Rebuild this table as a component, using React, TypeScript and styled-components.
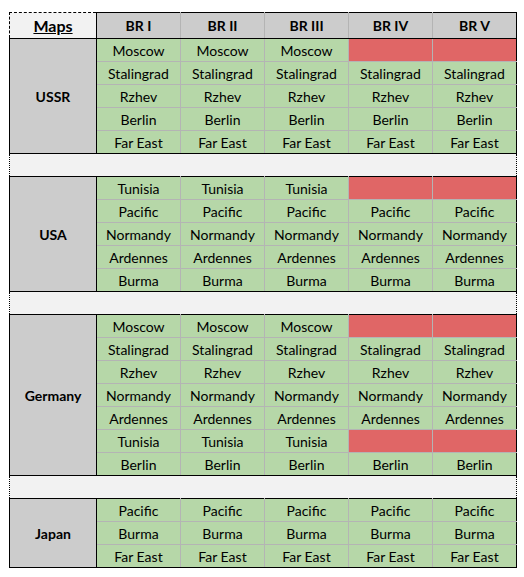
import React, { FC } from "react";
import styled, { createGlobalStyle } from "styled-components";

const GlobalStyle = createGlobalStyle`
  body {
    margin: 0;
    background: #ffffff;
    font-family: Lato, "Liberation Sans", sans-serif;
    color: #000000;
  }
`;

const Wrapper = styled.div`
  padding: 12px 0 0 9px;
`;

const Sheet = styled.table`
  border-collapse: collapse;
  table-layout: fixed;
  width: 508px;
`;

const HeadRow = styled.tr`
  height: 26px;
`;

const Row = styled.tr`
  height: 23px;
`;

const MapsCell = styled.th`
  padding: 0;
  background: #f2f2f2;
  border-top: 1px dashed #000;
  border-left: 1px dashed #000;
  border-right: 1px solid #000;
  border-bottom: 1px solid #000;
  font-size: 16px;
  font-weight: 700;
  text-decoration: underline;
`;

const BrCell = styled.th<{ $last?: boolean }>`
  padding: 0;
  background: #cccccc;
  border-top: 1px solid #000;
  border-bottom: 1px solid #000;
  border-left: 1px solid #b4b4b4;
  border-right: 1px solid ${(p) => (p.$last ? "#000" : "#b4b4b4")};
  font-size: 14px;
  font-weight: 700;
`;

const CountryCell = styled.td`
  padding: 0;
  background: #cccccc;
  border: 1px solid #000;
  text-align: center;
  vertical-align: middle;
  font-size: 14px;
  font-weight: 700;
`;

const MapCell = styled.td<{ $closed?: boolean; $first?: boolean; $end?: boolean; $last?: boolean }>`
  padding: 0 0 2px;
  background: ${(p) => (p.$closed ? "#e06666" : "#b6d7a8")};
  border: 1px solid #b4b4b4;
  border-top-color: ${(p) => (p.$first ? "#000" : "#b4b4b4")};
  border-bottom-color: ${(p) => (p.$end ? "#000" : "#b4b4b4")};
  border-right-color: ${(p) => (p.$last ? "#000" : "#b4b4b4")};
  text-align: center;
  vertical-align: bottom;
  font-size: 14px;
  white-space: nowrap;
`;

const GapCell = styled.td`
  padding: 0;
  background: #f2f2f2;
  border-left: 1px dotted #000;
  border-right: 1px dotted #000;
`;

type Group = {
  country: string;
  rows: string[][];
};

// empty string = map not available at that BR
const groups: Group[] = [
  {
    country: "USSR",
    rows: [
      ["Moscow", "Moscow", "Moscow", "", ""],
      ["Stalingrad", "Stalingrad", "Stalingrad", "Stalingrad", "Stalingrad"],
      ["Rzhev", "Rzhev", "Rzhev", "Rzhev", "Rzhev"],
      ["Berlin", "Berlin", "Berlin", "Berlin", "Berlin"],
      ["Far East", "Far East", "Far East", "Far East", "Far East"],
    ],
  },
  {
    country: "USA",
    rows: [
      ["Tunisia", "Tunisia", "Tunisia", "", ""],
      ["Pacific", "Pacific", "Pacific", "Pacific", "Pacific"],
      ["Normandy", "Normandy", "Normandy", "Normandy", "Normandy"],
      ["Ardennes", "Ardennes", "Ardennes", "Ardennes", "Ardennes"],
      ["Burma", "Burma", "Burma", "Burma", "Burma"],
    ],
  },
  {
    country: "Germany",
    rows: [
      ["Moscow", "Moscow", "Moscow", "", ""],
      ["Stalingrad", "Stalingrad", "Stalingrad", "Stalingrad", "Stalingrad"],
      ["Rzhev", "Rzhev", "Rzhev", "Rzhev", "Rzhev"],
      ["Normandy", "Normandy", "Normandy", "Normandy", "Normandy"],
      ["Ardennes", "Ardennes", "Ardennes", "Ardennes", "Ardennes"],
      ["Tunisia", "Tunisia", "Tunisia", "", ""],
      ["Berlin", "Berlin", "Berlin", "Berlin", "Berlin"],
    ],
  },
  {
    country: "Japan",
    rows: [
      ["Pacific", "Pacific", "Pacific", "Pacific", "Pacific"],
      ["Burma", "Burma", "Burma", "Burma", "Burma"],
      ["Far East", "Far East", "Far East", "Far East", "Far East"],
    ],
  },
];

const brs = ["BR I", "BR II", "BR III", "BR IV", "BR V"];

const App: FC = () => {
  return (
    <Wrapper>
      <GlobalStyle />
      <Sheet>
        <colgroup>
          <col style={{ width: 87 }} />
          {brs.map((b) => (
            <col key={b} style={{ width: 84 }} />
          ))}
        </colgroup>
        <thead>
          <HeadRow>
            <MapsCell>Maps</MapsCell>
            {brs.map((b, i) => (
              <BrCell key={b} $last={i === brs.length - 1}>
                {b}
              </BrCell>
            ))}
          </HeadRow>
        </thead>
        {groups.map((g, gi) => (
          <tbody key={g.country}>
            {g.rows.map((row, ri) => (
              <Row key={ri}>
                {ri === 0 && (
                  <CountryCell rowSpan={g.rows.length}>{g.country}</CountryCell>
                )}
                {row.map((m, ci) => (
                  <MapCell
                    key={ci}
                    $closed={m === ""}
                    $first={ri === 0}
                    $end={ri === g.rows.length - 1}
                    $last={ci === row.length - 1}
                  >
                    {m}
                  </MapCell>
                ))}
              </Row>
            ))}
            {gi < groups.length - 1 && (
              <Row>
                <GapCell colSpan={6} />
              </Row>
            )}
          </tbody>
        ))}
      </Sheet>
    </Wrapper>
  );
};

export default App;
